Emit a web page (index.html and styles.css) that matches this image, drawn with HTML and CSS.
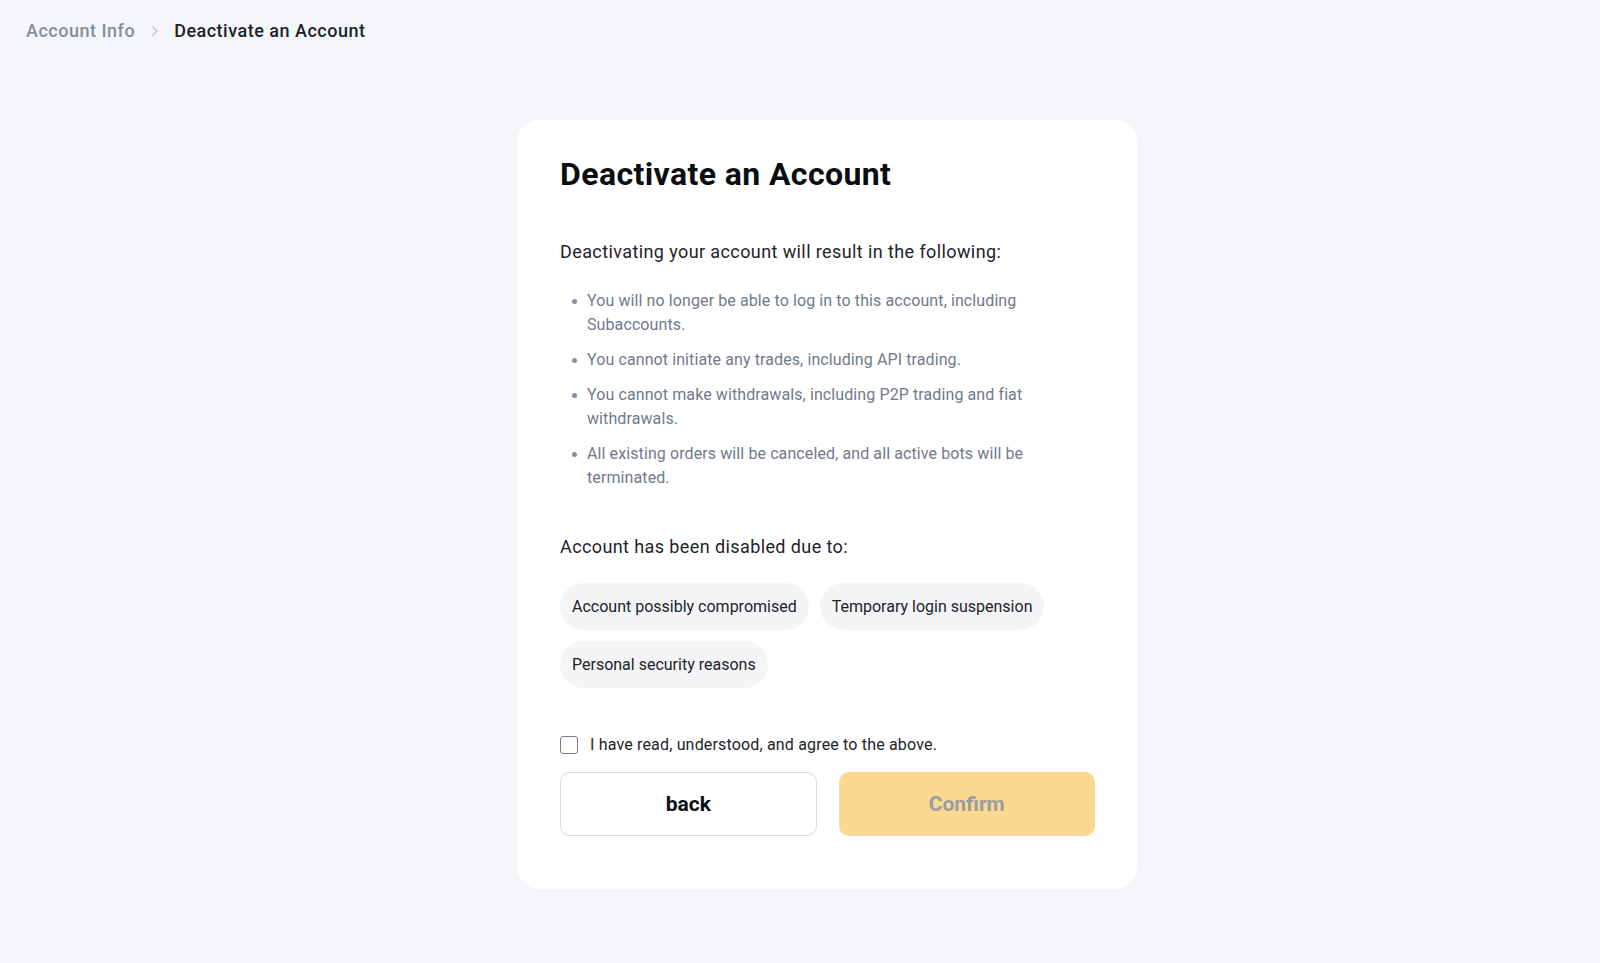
FILE: index.html
```html
<!DOCTYPE html>
<html lang="en">
<head>
<meta charset="utf-8">
<title>Deactivate an Account</title>
<link rel="stylesheet" href="styles.css">
</head>
<body>
  <nav class="breadcrumb">
    <span class="crumb-link">Account Info</span>
    <svg class="crumb-sep" width="16" height="16" viewBox="0 0 16 16" fill="none">
      <path d="M5.5 3.5 L10 8 L5.5 12.5" stroke="#B7BDC6" stroke-width="1.3" fill="none"/>
    </svg>
    <span class="crumb-current">Deactivate an Account</span>
  </nav>

  <main class="main">
    <section class="card">
      <h1 class="title">Deactivate an Account</h1>
      <p class="subtitle">Deactivating your account will result in the following:</p>
      <ul class="consequences">
        <li>You will no longer be able to log in to this account, including Subaccounts.</li>
        <li>You cannot initiate any trades, including API trading.</li>
        <li>You cannot make withdrawals, including P2P trading and fiat withdrawals.</li>
        <li>All existing orders will be canceled, and all active bots will be terminated.</li>
      </ul>
      <p class="subtitle reasons-title">Account has been disabled due to:</p>
      <div class="chips">
        <span class="chip">Account possibly compromised</span>
        <span class="chip">Temporary login suspension</span>
        <span class="chip">Personal security reasons</span>
      </div>
      <label class="agree">
        <span class="checkbox"></span>
        <span class="agree-text">I have read, understood, and agree to the above.</span>
      </label>
      <div class="actions">
        <button class="btn btn-back" type="button">back</button>
        <button class="btn btn-confirm" type="button" disabled>Confirm</button>
      </div>
    </section>
  </main>
</body>
</html>
```

FILE: styles.css
```css
* {
  box-sizing: border-box;
}

html, body {
  margin: 0;
  padding: 0;
}

body {
  background: #F5F6F9;
  font-family: Roboto, "Liberation Sans", Arial, sans-serif;
  color: #1E2329;
  min-height: 963px;
}

.breadcrumb {
  display: flex;
  align-items: center;
  padding: 19px 0 0 26px;
  height: 43px;
  font-size: 18px;
  line-height: 24px;
  font-weight: 500;
  letter-spacing: 0.5px;
}

.crumb-link {
  color: #848E9C;
}

.crumb-sep {
  margin: 0 11px 0 12px;
}

.crumb-current {
  color: #1E2329;
}

.main {
  display: flex;
  justify-content: center;
  padding: 77px 0 0 54px;
}

.card {
  width: 620px;
  background: #FFFFFF;
  border-radius: 22px;
  padding: 34px 42px 53px 43px;
}

.title {
  margin: 0;
  font-size: 32px;
  line-height: 40px;
  font-weight: 700;
  letter-spacing: 0.4px;
  color: #0B0E11;
}

.subtitle {
  margin: 44px 0 0;
  font-size: 18px;
  line-height: 28px;
  font-weight: 400;
  letter-spacing: 0.4px;
  color: #1E2329;
}

.consequences {
  list-style: none;
  margin: 23px 0 0;
  padding: 0 0 0 27px;
  font-size: 16px;
  line-height: 24px;
  letter-spacing: 0.1px;
  color: #707A8A;
}

.consequences li {
  position: relative;
}

.consequences li + li {
  margin-top: 11px;
}

.consequences li::before {
  content: "";
  position: absolute;
  left: -15px;
  top: 10px;
  width: 5px;
  height: 5px;
  border-radius: 50%;
  background: #848E9C;
}

.reasons-title {
  margin-top: 43px;
}

.chips {
  display: flex;
  flex-wrap: wrap;
  gap: 11px 11px;
  margin-top: 22px;
}

.chip {
  display: inline-flex;
  align-items: center;
  height: 47px;
  padding: 0 12px;
  border-radius: 24px;
  background: #F4F5F7;
  font-size: 16px;
  color: #1E2329;
}

.agree {
  display: flex;
  align-items: center;
  gap: 12px;
  margin-top: 45px;
  font-size: 16px;
  line-height: 24px;
  letter-spacing: 0.17px;
  color: #1E2329;
  cursor: pointer;
}

.checkbox {
  width: 18px;
  height: 18px;
  border: 1.5px solid #707A8A;
  border-radius: 3px;
  flex: none;
}

.actions {
  display: grid;
  grid-template-columns: 1fr 1fr;
  gap: 22px;
  margin-top: 15px;
}

.btn {
  height: 64px;
  border-radius: 10px;
  font-family: inherit;
  font-size: 21px;
  font-weight: 700;
}

.btn-back {
  background: #FFFFFF;
  border: 1px solid #D8DCE1;
  color: #0B0E11;
}

.btn-confirm {
  background: #FCD990;
  border: none;
  color: #999CA1;
}
```
